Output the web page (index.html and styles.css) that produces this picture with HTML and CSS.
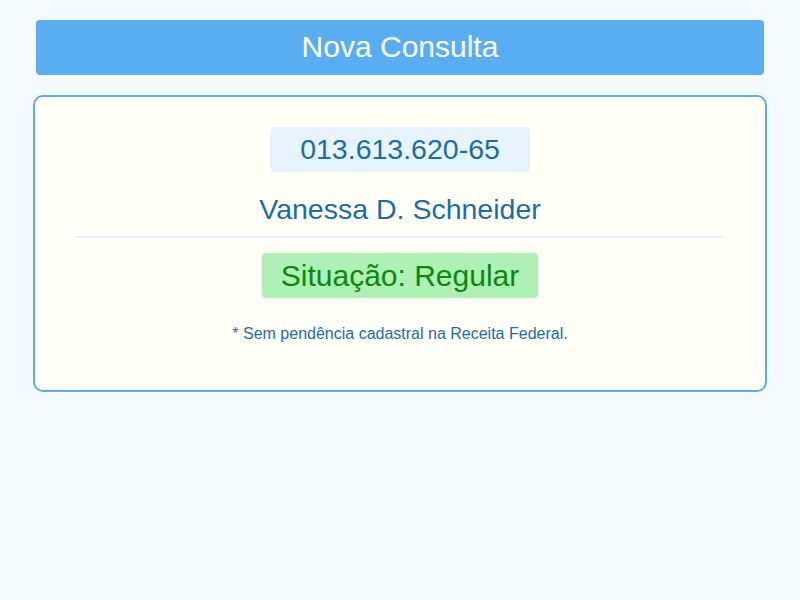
FILE: index.html
```html
<!DOCTYPE html>
<html lang="pt-BR">
<head>
<meta charset="utf-8">
<link rel="stylesheet" href="styles.css">
</head>
<body>
<div class="page">
  <header class="title-bar">Nova Consulta</header>
  <section class="card">
    <div class="cpf">013.613.620-65</div>
    <div class="name">Vanessa D. Schneider</div>
    <hr class="divider">
    <div class="status">Situação: Regular</div>
    <p class="note">* Sem pendência cadastral na Receita Federal.</p>
  </section>
</div>
</body>
</html>
```
FILE: styles.css
```css
html, body {
  margin: 0;
  padding: 0;
  background: #f5faff;
  font-family: "Liberation Sans", Arial, sans-serif;
}
.page {
  padding: 20px 33px;
  display: flex;
  flex-direction: column;
  gap: 20px;
}
.title-bar {
  margin: 0 3px;
  height: 55px;
  background: #58aef0;
  border-radius: 4px;
  color: #fff;
  font-size: 30px;
  display: flex;
  align-items: center;
  justify-content: center;
  padding-bottom: 2px;
  box-sizing: border-box;
}
.card {
  border: 2px solid #5aaeee;
  border-radius: 10px;
  background: #fffff8;
  padding: 30px 40px 47px;
  display: flex;
  flex-direction: column;
  align-items: center;
}
.cpf {
  width: 260px;
  height: 45px;
  background: #e8f4fd;
  border-radius: 5px;
  color: #1a6ea6;
  font-size: 28.5px;
  display: flex;
  align-items: center;
  justify-content: center;
}
.name {
  margin-top: 22px;
  color: #1a6ea6;
  font-size: 28.5px;
  line-height: 30px;
}
.divider {
  align-self: stretch;
  border: none;
  height: 2px;
  background: #e6f1fa;
  margin: 12px 0 15px;
}
.status {
  width: 276px;
  height: 45px;
  background: #aff0b6;
  border-radius: 4px;
  color: #0a8a0a;
  font-size: 30px;
  display: flex;
  align-items: center;
  justify-content: center;
}
.note {
  margin: 27px 0 0;
  color: #1a6ea6;
  font-size: 16px;
  line-height: 18px;
}
```
